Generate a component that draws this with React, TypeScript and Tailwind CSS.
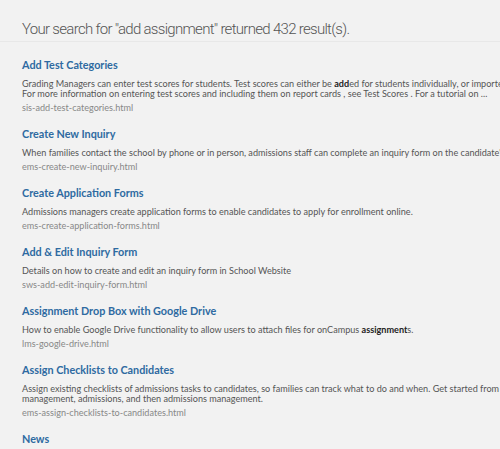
import React from 'react';

type Result = {
  title: string;
  lines: React.ReactNode[];
  url: string;
};

const results: Result[] = [
  {
    title: 'Add Test Categories',
    lines: [
      <>
        Grading Managers can enter test scores for students. Test scores can either be <b className="font-bold text-[#222]">add</b>ed for students individually, or imported from a file.
      </>,
      'For more information on entering test scores and including them on report cards , see Test Scores . For a tutorial on ...',
    ],
    url: 'sis-add-test-categories.html',
  },
  {
    title: 'Create New Inquiry',
    lines: [
      "When families contact the school by phone or in person, admissions staff can complete an inquiry form on the candidate's behalf.",
    ],
    url: 'ems-create-new-inquiry.html',
  },
  {
    title: 'Create Application Forms',
    lines: ['Admissions managers create application forms to enable candidates to apply for enrollment online.'],
    url: 'ems-create-application-forms.html',
  },
  {
    title: 'Add & Edit Inquiry Form',
    lines: ['Details on how to create and edit an inquiry form in School Website'],
    url: 'sws-add-edit-inquiry-form.html',
  },
  {
    title: 'Assignment Drop Box with Google Drive',
    lines: [
      <>
        How to enable Google Drive functionality to allow users to attach files for onCampus <b className="font-bold text-[#222]">assignment</b>s.
      </>,
    ],
    url: 'lms-google-drive.html',
  },
  {
    title: 'Assign Checklists to Candidates',
    lines: [
      'Assign existing checklists of admissions tasks to candidates, so families can track what to do and when. Get started from Enrollment',
      'management, admissions, and then admissions management.',
    ],
    url: 'ems-assign-checklists-to-candidates.html',
  },
  {
    title: 'News',
    lines: ['News'],
    url: 'news.html',
  },
];

export default function App() {
  return (
    <div className="w-[500px] h-[449px] overflow-hidden bg-[#f2f2f2]">
      <div className="h-[42px] border-b border-[#e8e8e8] pl-[22px] pt-[19px]">
        <h1 className="font-['Roboto',sans-serif] font-light text-[15px] leading-[20px] text-[#555] whitespace-nowrap tracking-[-0.7px]">
          Your search for "add assignment" returned 432 result(s).
        </h1>
      </div>
      <div className="pl-[22px] pt-[16px] font-['Lato',sans-serif]">
        {results.map((r) => (
          <div key={r.url} className="mb-[14px]">
            <h2 className="text-[10.8px] leading-[14px] font-bold text-[#2e6aa1] whitespace-nowrap">{r.title}</h2>
            <div className="mt-[7px] text-[9.1px] leading-[10px] text-[#555]">
              {r.lines.map((l, i) => (
                <p key={i} className="whitespace-nowrap">{l}</p>
              ))}
            </div>
            <p className="mt-[3px] text-[9.1px] leading-[11px] text-[#888] whitespace-nowrap">{r.url}</p>
          </div>
        ))}
      </div>
    </div>
  );
}
